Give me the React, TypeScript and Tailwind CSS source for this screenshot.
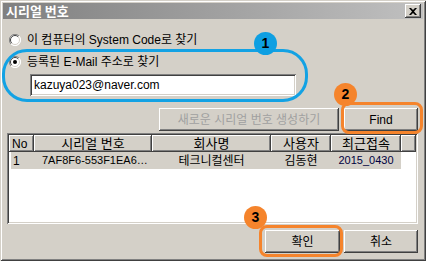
import React from "react";

const raised =
  "shadow-[inset_-1px_-1px_#404040,inset_1px_1px_#ffffff,inset_-2px_-2px_#808080,inset_2px_2px_#d4d0c8]";
const sunken =
  "shadow-[inset_1px_1px_#808080,inset_-1px_-1px_#ffffff,inset_2px_2px_#404040,inset_-2px_-2px_#d4d0c8]";
const headerCell =
  "shadow-[inset_-1px_-1px_#404040,inset_1px_1px_#ffffff,inset_-2px_-2px_#808080]";

const font = { fontFamily: '"Liberation Sans", "Noto Sans CJK KR", sans-serif' };

function Radio({ checked }: { checked: boolean }) {
  return (
    <svg width="12" height="12" viewBox="0 0 12 12" className="shrink-0">
      <circle cx="6" cy="6" r="5.5" fill="#ffffff" />
      <path d="M2 10 A5.5 5.5 0 0 1 10 2" stroke="#808080" strokeWidth="1" fill="none" />
      <path d="M2.8 9.2 A4.5 4.5 0 0 1 9.2 2.8" stroke="#404040" strokeWidth="1" fill="none" />
      <path d="M10 2 A5.5 5.5 0 0 1 2 10" stroke="#ffffff" strokeWidth="1" fill="none" />
      <path d="M9.2 2.8 A4.5 4.5 0 0 1 2.8 9.2" stroke="#d4d0c8" strokeWidth="1" fill="none" />
      {checked && <circle cx="6" cy="6" r="2" fill="#000" />}
    </svg>
  );
}

function Badge({ n, color }: { n: string; color: string }) {
  return (
    <div
      className={`w-[23px] h-[23px] rounded-full flex items-center justify-center text-[14px] font-bold text-black ${color}`}
      style={{ fontFamily: '"Liberation Sans", sans-serif' }}
    >
      {n}
    </div>
  );
}

export default function App() {
  return (
    <div
      className="w-[426px] h-[261px] bg-[#d4d0c8] p-[3px] flex flex-col shadow-[inset_1px_1px_#d4d0c8,inset_-1px_-1px_#404040,inset_2px_2px_#ffffff,inset_-2px_-2px_#808080] overflow-hidden"
      style={font}
    >
      {/* Title bar */}
      <div className="h-[16px] flex items-center justify-between bg-gradient-to-r from-[#808080] to-[#c0c0c0]">
        <span
          className="pl-[3px] text-white font-bold text-[13px] leading-[16px]"
          style={{ fontFamily: '"Noto Sans CJK KR", sans-serif' }}
        >
          시리얼 번호
        </span>
        <div
          className={`w-[16px] h-[14px] mr-[2px] bg-[#d4d0c8] flex items-center justify-center ${raised}`}
        >
          <svg width="8" height="7" viewBox="0 0 8 7">
            <path d="M0 0h2l2 2 2-2h2L5 3.5 8 7H6L4 5 2 7H0l3-3.5z" fill="#000" />
          </svg>
        </div>
      </div>

      {/* Content */}
      <div className="relative flex-1 flex flex-col">
        {/* Radio 1 */}
        <div className="mt-[14px] h-[14px] flex items-center ml-[6px] gap-[6px] text-[12px] text-black">
          <Radio checked={false} />
          <span className="leading-[14px]">이 컴퓨터의 System Code로 찾기</span>
        </div>
        {/* Radio 2 */}
        <div className="mt-[8px] h-[14px] flex items-center ml-[6px] gap-[6px] text-[12px] text-black">
          <Radio checked={true} />
          <span className="leading-[14px]">등록된 E-Mail 주소로 찾기</span>
        </div>
        {/* Input */}
        <div
          className={`mt-[5px] ml-[27px] w-[266px] h-[22px] bg-white flex items-center pl-[4px] text-[12px] text-black ${sunken}`}
        >
          kazuya023@naver.com
        </div>

        {/* Button row */}
        <div className="mt-[12px] flex justify-end gap-[5px] mr-[5px]">
          <div
            className={`w-[180px] h-[23px] flex items-center justify-center text-[12px] text-[#a0a0a0] ${raised}`}
          >
            새로운 시리얼 번호 생성하기
          </div>
          <div
            className={`w-[74px] h-[23px] flex items-center justify-center text-[12px] text-black ${raised}`}
          >
            Find
          </div>
        </div>

        {/* List view */}
        <div className={`mt-[2px] ml-[4px] w-[411px] h-[91px] bg-white p-[2px] flex flex-col ${sunken}`}>
          <div className="h-[17px] flex text-[13px] text-black shrink-0">
            <div className={`w-[25px] bg-[#d4d0c8] flex items-center pl-[3px] text-[12px] ${headerCell}`}>No</div>
            <div className={`w-[118px] bg-[#d4d0c8] flex items-center justify-center ${headerCell}`}>시리얼 번호</div>
            <div className={`w-[119px] bg-[#d4d0c8] flex items-center justify-center ${headerCell}`}>회사명</div>
            <div className={`w-[60px] bg-[#d4d0c8] flex items-center justify-center ${headerCell}`}>사용자</div>
            <div className={`w-[70px] bg-[#d4d0c8] flex items-center justify-center ${headerCell}`}>최근접속</div>
            <div className={`flex-1 bg-[#d4d0c8] ${headerCell}`}></div>
          </div>
          <div className="h-[17px] flex text-black ml-[2px] w-[390px] bg-[#d4d0c8]">
            <div className="w-[23px] flex items-center pl-[2px] text-[12px]">1</div>
            <div className="w-[118px] flex items-center pl-[8px] text-[11px]">7AF8F6-553F1EA6…</div>
            <div className="w-[119px] flex items-center justify-center text-[12px]">테크니컬센터</div>
            <div className="w-[60px] flex items-center justify-center text-[12px]">김동현</div>
            <div className="w-[70px] flex items-center justify-center text-[11px] text-[#000040]">2015_0430</div>
          </div>
        </div>

        {/* Bottom buttons */}
        <div className="mt-[6px] flex justify-end gap-[4px] mr-[5px]">
          <div className={`w-[75px] h-[23px] flex items-center justify-center text-[12px] text-black ${raised}`}>
            확인
          </div>
          <div className={`w-[74px] h-[23px] flex items-center justify-center text-[12px] text-black ${raised}`}>
            취소
          </div>
        </div>

        {/* Annotations */}
        <div className="absolute left-[-1px] top-[30px] w-[306px] h-[53px] rounded-[25px] border-[3px] border-[#13a2e4]"></div>
        <div className="absolute left-[251px] top-[13px]">
          <Badge n="1" color="bg-[#0e9fe2]" />
        </div>

        <div className="absolute left-[338px] top-[83px] w-[82px] h-[32px] rounded-[8px] border-[3px] border-[#f5842c]"></div>
        <div className="absolute left-[331px] top-[64px]">
          <Badge n="2" color="bg-[#f5842c]" />
        </div>

        <div className="absolute left-[256px] top-[206px] w-[84px] h-[32px] rounded-[8px] border-[3px] border-[#f5842c]"></div>
        <div className="absolute left-[241px] top-[187px]">
          <Badge n="3" color="bg-[#f5842c]" />
        </div>
      </div>
    </div>
  );
}
